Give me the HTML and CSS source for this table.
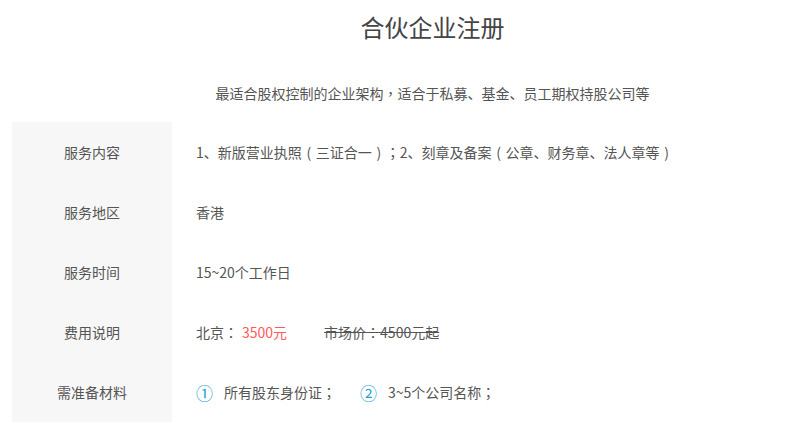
FILE: index.html
```html
<!DOCTYPE html>
<html lang="zh-CN">

<head>
    <meta charset="UTF-8" />
    <meta name="viewport" content="width=device-width, initial-scale=1.0" />
    <title>合伙企业注册</title>
    <link rel="stylesheet" href="styles.css">
</head>

<body>
    <div class="wrap">
        <header class="head">
            <h1 class="title">合伙企业注册</h1>
            <p class="subtitle">最适合股权控制的企业架构<span class="p" lang="zh-TW">，</span>适合于私募、基金、员工期权持股公司等</p>
        </header>

        <div class="info">
            <div class="row">
                <div class="label">服务内容</div>
                <div class="value">1、新版营业执照<span class="paren">(</span>三证合一<span class="paren">)</span><span class="p" lang="zh-TW">；</span>2、刻章及备案<span class="paren">(</span>公章、财务章、法人章等<span class="paren">)</span></div>
            </div>
            <div class="row">
                <div class="label">服务地区</div>
                <div class="value">香港</div>
            </div>
            <div class="row">
                <div class="label">服务时间</div>
                <div class="value">15~20个工作日</div>
            </div>
            <div class="row">
                <div class="label">费用说明</div>
                <div class="value">
                    <span>北京<span class="p" lang="zh-TW">：</span></span><span class="price">3500元</span><span class="market">市场价<span class="p" lang="zh-TW">：</span>4500元起</span>
                </div>
            </div>
            <div class="row">
                <div class="label">需准备材料</div>
                <div class="value">
                    <span class="num">①</span><span class="item">所有股东身份证<span class="p" lang="zh-TW">；</span></span>
                    <span class="num">②</span><span class="item">3~5个公司名称<span class="p" lang="zh-TW">；</span></span>
                </div>
            </div>
        </div>
    </div>
</body>

</html>
```

FILE: styles.css
```css
/* Reset some default styles */
* {
    box-sizing: border-box;
    margin: 0;
    padding: 0;
}

body {
    font-family: "Noto Sans CJK SC", "Liberation Sans", sans-serif;
    background-color: #fff;
    color: #555;
    font-size: 14px;
}

.wrap {
    margin-left: 12px;
}

.head {
    padding-left: 60px;
    text-align: center;
}

.title {
    font-size: 24px;
    font-weight: 400;
    line-height: 54px;
    color: #444;
}

.subtitle {
    margin-top: 24px;
    line-height: 30px;
}

.info {
    margin-top: 14px;
}

.row {
    display: flex;
    height: 60px;
    align-items: stretch;
}

.label {
    width: 160px;
    background-color: #f7f7f7;
    display: flex;
    align-items: center;
    justify-content: center;
}

.value {
    flex: 1;
    display: flex;
    align-items: center;
    padding-left: 24px;
    white-space: nowrap;
}

/* full-width punctuation drawn centred, with air on both sides */
.p {
    font-family: "Noto Sans CJK TC", sans-serif;
}

.paren {
    display: inline-block;
    width: 14px;
    text-align: center;
}

.price {
    color: #ff5a5a;
    margin-left: 4px;
}

.market {
    margin-left: 37px;
    text-decoration: line-through;
}

.num {
    color: #1a9fd0;
    font-size: 17px;
    margin-right: 11px;
}

.item {
    margin-right: 24px;
}
```
